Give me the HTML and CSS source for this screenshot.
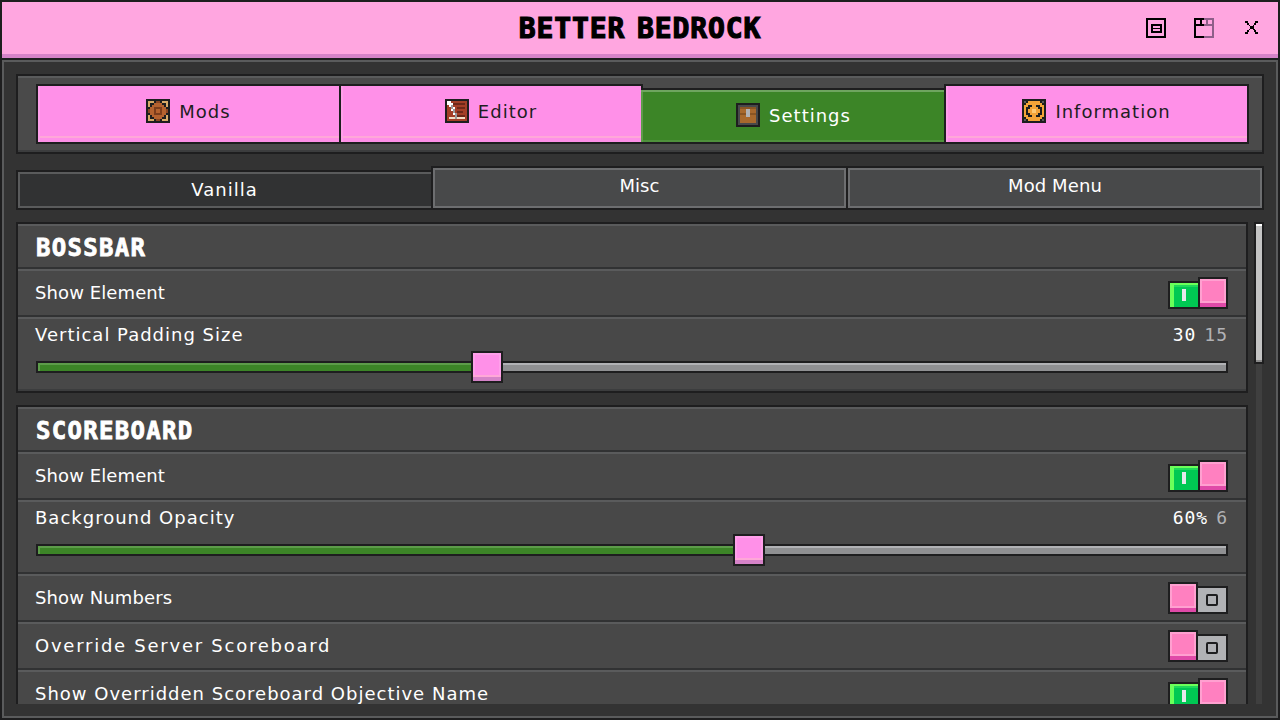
FILE: index.html
```html
<!DOCTYPE html>
<html lang="en">
<head>
    <meta charset="UTF-8">
    <title>Better Bedrock</title>
    <link rel="stylesheet" href="styles.css">
</head>
<body>
<div class="app">
    <!-- Title bar -->
    <header class="titlebar">
        <h1 class="title">BETTER BEDROCK</h1>
        <div class="window-btns">
            <svg class="win-icon" viewBox="0 0 20 20" shape-rendering="crispEdges"><path fill="#000" d="M0 0h20v20H0zM2 2v16h16V2z" fill-rule="evenodd"/><path fill="#000" fill-rule="evenodd" d="M5 6h11v9H5zM7 8v2h7V8zM7 11v2h7v-2z"/></svg>
            <svg class="win-icon" viewBox="0 0 20 20" shape-rendering="crispEdges"><path fill="#000" d="M0 0h10v2H8v4h2v2H2v10h8v2H0zM2 2v4h4V2z" fill-rule="evenodd"/><path fill="#8f5f8a" d="M10 0h10v20H10v-2h8V8h-8V6h2V2h-2zM14 2v4h4V2z" fill-rule="evenodd"/></svg>
            <svg class="win-icon close" viewBox="0 0 13 13" shape-rendering="crispEdges"><path fill="#000" d="M0 0h3v2h1v2h1v1h3V4h1V2h1V0h3v2h-2v2h-2v1H9v3h1v1h1v2h2v2h-3v-2H9V9H8V8H5v1H4v2H3v2H0v-2h2V9h2V8h1V5H4V4H2V2H0z"/></svg>
        </div>
    </header>

    <main class="panel">
        <!-- Main tabs -->
        <div class="tab-card">
            <div class="tabs">
                <div class="tab">
                    <svg class="tab-icon" viewBox="0 0 12 12" shape-rendering="crispEdges"><rect width="12" height="12" fill="#1e1e1f"/><path fill="#d8ab68" d="M1 1h3v1H2v2H1zM8 1h3v3h-1V2H8zM1 8h1v2h2v1H1zM10 8h1v3H8v-1h2z"/><path fill="#8a4522" d="M5 1h2v1H5zM1 5h1v2H1zM10 5h1v2h-1zM5 10h2v1H5z"/><path fill="#b5622f" d="M4 2h4v1h1v1h1v4H9v1H8v1H4V9H3V8H2V4h1V3h1z"/><path fill="#7d3d1c" d="M4 4h4v4H4z"/><path fill="#b5622f" d="M5 5h2v2H5z"/></svg>
                    <span>Mods</span>
                </div>
                <div class="tab">
                    <svg class="tab-icon" viewBox="0 0 12 12" shape-rendering="crispEdges"><rect width="12" height="12" fill="#1e1e1f"/><rect x="1" y="1" width="10" height="10" fill="#a33f26"/><path fill="#6d2818" d="M4 2h6v1H4zM6 4h4v1H6zM6 6h3v1H6zM5 8h5v1H5z"/><path fill="#f2dfc6" d="M2 9h8v1H2z"/><path fill="#fff" d="M1 1h2v1h1v2h1v3h1v3H5V8H4V6H3V4H2V3H1z"/><path fill="#9a9a9a" d="M3 3h1v2h1v2h1v3H5V7H4V5H3z"/></svg>
                    <span>Editor</span>
                </div>
                <div class="tab active">
                    <svg class="tab-icon" viewBox="0 0 12 12" shape-rendering="crispEdges"><rect width="12" height="12" fill="#1e1e1f"/><rect x="1" y="1" width="10" height="10" fill="#48494a"/><rect x="2" y="2" width="8" height="8" fill="#a8692d"/><path fill="#8a5523" d="M2 2h8v1H2zM2 5h8v1H2z"/><path fill="#b1b2b5" d="M5 3h2v4H5z"/></svg>
                    <span>Settings</span>
                </div>
                <div class="tab">
                    <svg class="tab-icon" viewBox="0 0 12 12" shape-rendering="crispEdges"><rect width="12" height="12" fill="#1e1e1f"/><path fill="#5a5b5c" d="M1 1h1v1H1zM10 1h1v1h-1zM1 10h1v1H1zM10 10h1v1h-1z"/><path fill="#f4a338" d="M3 1h6v1h1v1h1v6h-1v1H9v1H3v-1H2V9H1V3h1V2h1zM3 3v1H2v4h1v1h6V8h1V4H9V3z" fill-rule="evenodd"/><path fill="#f4a338" d="M5 3h2v1h1v1h1v2H8v1H7v1H5V8H4V7H3V5h1V4h1z"/><path fill="#ffc873" d="M5 5h2v2H5z"/></svg>
                    <span>Information</span>
                </div>
            </div>
        </div>

        <!-- Sub tabs -->
        <div class="subtabs">
            <div class="subtab current">Vanilla</div>
            <div class="subtab"><span class="tight">Misc</span></div>
            <div class="subtab"><span class="tight">Mod Menu</span></div>
        </div>

        <div class="scroll-area">
            <div class="sections">
                <section class="section">
                    <h2 class="section-title">BOSSBAR</h2>
                    <div class="row">
                        <span class="label tight">Show Element</span>
                        <div class="toggle on"><div class="switch"><i></i></div><div class="knob"></div></div>
                    </div>
                    <div class="row slider-row">
                        <div class="slider-head">
                            <span class="label">Vertical Padding Size</span>
                            <span class="value">30<em>15</em></span>
                        </div>
                        <div class="slider">
                            <div class="track"><div class="fill" style="width: 435px"></div></div>
                            <div class="handle" style="left: 435px"></div>
                        </div>
                    </div>
                </section>

                <section class="section">
                    <h2 class="section-title">SCOREBOARD</h2>
                    <div class="row">
                        <span class="label tight">Show Element</span>
                        <div class="toggle on"><div class="switch"><i></i></div><div class="knob"></div></div>
                    </div>
                    <div class="row slider-row">
                        <div class="slider-head">
                            <span class="label">Background Opacity</span>
                            <span class="value">60%<em>6</em></span>
                        </div>
                        <div class="slider">
                            <div class="track"><div class="fill" style="width: 697px"></div></div>
                            <div class="handle" style="left: 697px"></div>
                        </div>
                    </div>
                    <div class="row">
                        <span class="label tight">Show Numbers</span>
                        <div class="toggle"><div class="knob"></div><div class="switch"><i></i></div></div>
                    </div>
                    <div class="row">
                        <span class="label wide">Override Server Scoreboard</span>
                        <div class="toggle"><div class="knob"></div><div class="switch"><i></i></div></div>
                    </div>
                    <div class="row">
                        <span class="label">Show Overridden Scoreboard Objective Name</span>
                        <div class="toggle on"><div class="switch"><i></i></div><div class="knob"></div></div>
                    </div>
                </section>
            </div>
            <div class="scrollbar"><div class="thumb"></div></div>
        </div>
    </main>
</div>
</body>
</html>
```

FILE: styles.css
```css
* {
    box-sizing: border-box;
}

html, body {
    margin: 0;
    height: 100%;
    overflow: hidden;
}

body {
    font-family: 'DejaVu Sans', sans-serif;
    font-size: 18px;
    letter-spacing: 1px;
    color: #fff;
    background-color: #1e1e1f;
}

.tight {
    letter-spacing: 0.1px;
}

.wide {
    letter-spacing: 1.75px;
}

.app {
    height: 720px;
    border: 2px solid #1e1e1f;
    display: flex;
    flex-direction: column;
}

/* Title bar */
.titlebar {
    height: 56px;
    margin-bottom: 2px;
    flex: none;
    position: relative;
    display: flex;
    align-items: center;
    justify-content: center;
    background-color: #ffa6e0;
    border-bottom: 4px solid #d583c8;
}

.title {
    margin: 0;
    font-family: 'DejaVu Sans Mono', monospace;
    font-size: 28px;
    font-weight: bold;
    letter-spacing: 0.9px;
    word-spacing: -6px;
    color: #000;
    -webkit-text-stroke: 1.2px #000;
}

.window-btns {
    position: absolute;
    right: 0;
    top: 16px;
    display: flex;
    align-items: flex-start;
}

.win-icon {
    width: 20px;
    height: 20px;
    margin-right: 28px;
    display: block;
}

.win-icon.close {
    width: 13px;
    height: 13px;
    margin: 3px 20px 0 3px;
}

/* Panel */
.panel {
    flex: 1;
    min-height: 0;
    display: flex;
    flex-direction: column;
    padding: 12px;
    background-color: #333333;
    border: 2px solid #5a5b5c;
}

.tab-card {
    flex: none;
    height: 80px;
    padding: 8px 13px 8px 18px;
    background-color: #4a4a4a;
    border: 2px solid #1e1e1f;
    box-shadow: inset 0 2px #5a5b5c, inset 0 -2px #3c3d3e;
}

.tabs {
    display: grid;
    grid-template-columns: 303px 302px 303px 1fr;
    height: 60px;
}

.tab {
    display: flex;
    align-items: center;
    justify-content: center;
    gap: 9px;
    margin-right: -2px;
    padding-bottom: 6px;
    color: #1e1e1f;
    background-color: #ff90e8;
    border: 2px solid #1e1e1f;
    box-shadow: inset 2px 0 #ffa0ea, inset 0 -4px #ff90e8, inset 0 -6px #ffa8d8;
}

.tab:last-child {
    margin-right: 0;
}

.tab.active {
    margin-top: 4px;
    padding-bottom: 2px;
    color: #fff;
    background-color: #3c8527;
    box-shadow: inset 0 2px #6fa55f, inset 2px 0 #5d9c4a, inset -2px 0 #5d9c4a, inset 0 -2px #4f913c;
    border-right: none;
    border-left: none;
}

.tab-icon {
    width: 24px;
    height: 24px;
    flex: none;
}

.subtabs {
    flex: none;
    display: grid;
    grid-template-columns: 415px 415px 1fr;
    align-items: end;
    height: 44px;
    margin-top: 12px;
}

.subtab {
    height: 44px;
    display: flex;
    align-items: center;
    justify-content: center;
    padding-bottom: 6px;
    background-color: #48494a;
    border: 2px solid #1e1e1f;
    box-shadow: inset 0 0 0 2px #6d6e70;
    margin-right: -2px;
}

.subtab:last-child {
    margin-right: 0;
}

.subtab.current {
    height: 40px;
    padding-bottom: 2px;
    background-color: #313233;
    box-shadow: inset 2px 2px #5a5b5c, inset 0 -2px #5a5b5c;
}

/* Settings list */
.scroll-area {
    flex: 1;
    min-height: 0;
    margin-top: 12px;
    display: flex;
    gap: 6px;
    overflow: hidden;
}

.sections {
    width: 1232px;
    flex: none;
    display: flex;
    flex-direction: column;
    gap: 12px;
}

.section {
    flex: none;
    padding-bottom: 2px;
    background-color: #484848;
    border: 2px solid #1e1e1f;
    box-shadow: inset 0 2px #5a5b5c, inset 0 -2px #3c3d3e;
}

.section-title {
    margin: 0;
    height: 43px;
    display: flex;
    align-items: center;
    padding: 4px 0 0 18px;
    font-family: 'DejaVu Sans Mono', monospace;
    font-size: 24px;
    font-weight: bold;
    letter-spacing: 1.3px;
    -webkit-text-stroke: 0.8px #fff;
}

.row {
    height: 48px;
    display: flex;
    align-items: center;
    justify-content: space-between;
    padding: 8px 18px 6px;
    border-top: 2px solid #313233;
    box-shadow: inset 0 2px #5a5b5c;
}

.label {
    margin: 0 0 2px -1px;
}

.slider-row {
    height: 74px;
    display: block;
}

.slider-head {
    height: 20px;
    display: flex;
    align-items: center;
    justify-content: space-between;
}

.value {
    font-family: 'DejaVu Sans Mono', monospace;
    margin-bottom: 2px;
}

.value em {
    font-style: normal;
    color: #b1b2b5;
    margin-left: 8px;
}

.slider {
    position: relative;
    height: 32px;
    margin-top: 6px;
    display: flex;
    align-items: center;
}

.track {
    width: 100%;
    height: 12px;
    background-color: #8f9092;
    border: 2px solid #1e1e1f;
    box-shadow: inset 0 2px #b1b2b5;
}

.fill {
    height: 100%;
    background-color: #3c8527;
    box-shadow: inset 2px 2px #5d9c4a;
}

.handle {
    position: absolute;
    top: 0;
    width: 32px;
    height: 32px;
    background-color: #ff90e8;
    border: 2px solid #1e1e1f;
    box-shadow: inset 0 -4px #d583c8, inset 0 -6px #ffa8d8, inset 2px 2px #ffa0ea, inset -2px 0 #ffa0ea;
}

/* Toggles */
.toggle {
    width: 60px;
    height: 32px;
    flex: none;
    display: flex;
    align-items: flex-end;
}

.knob {
    width: 30px;
    height: 32px;
    flex: none;
    position: relative;
    background-color: #ff80c0;
    border: 2px solid #1e1e1f;
    box-shadow: inset 0 -4px #e04aa8, inset 0 -6px #ffa0d0, inset 2px 2px #ffa0d0, inset -2px 0 #ffa0d0;
}

.switch {
    width: 32px;
    height: 28px;
    flex: none;
    margin-left: -2px;
    display: flex;
    align-items: center;
    justify-content: center;
    background-color: #b1b2b5;
    border: 2px solid #1e1e1f;
}

.switch i {
    width: 12px;
    height: 12px;
    border: 2px solid #1e1e1f;
    border-radius: 2px;
    display: block;
}

.on .switch {
    margin-left: 0;
    margin-right: -2px;
    background-color: #00c853;
    box-shadow: inset 4px 2px #6bff5a, inset 4px 4px #1fd95a;
}

.on .switch i {
    width: 4px;
    height: 12px;
    border: none;
    border-radius: 0;
    background-color: #e6e8eb;
}

/* Scrollbar */
.scrollbar {
    width: 10px;
    flex: none;
    padding: 0 2px;
    background: linear-gradient(#3f3f3f, #3f3f3f) center / 6px 100% no-repeat;
}

.thumb {
    width: 10px;
    height: 142px;
    margin-left: -2px;
    background-color: #c4c4c4;
    border: 2px solid #1e1e1f;
    box-shadow: inset 0 2px #fff, inset 0 -2px #8a8a8a;
}
```
